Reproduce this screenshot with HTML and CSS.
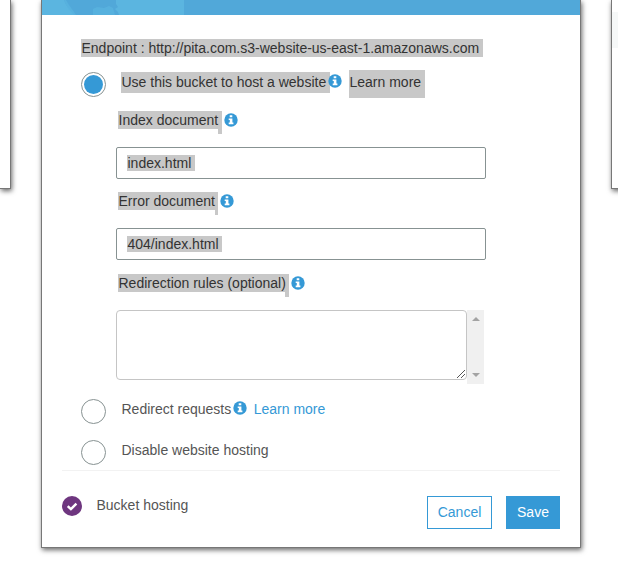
FILE: index.html
```html
<!DOCTYPE html>
<html lang="en">
<head>
<meta charset="utf-8">
<title>Static website hosting</title>
<link rel="stylesheet" href="styles.css">
</head>
<body>
<svg width="0" height="0" class="defs">
  <symbol id="info" viewBox="0 0 14 14">
    <circle cx="7" cy="7" r="6.7" fill="#3599d6"/>
    <path d="M5.7 2.3h2.6v2H5.7zM4.7 5.4h3.7v4.2h1v1.6H4.7V9.6h1.1V7H4.7z" fill="#fff"/>
  </symbol>
</svg>
<main class="page">
  <div class="card card-left"></div>
  <section class="card modal">
    <svg class="banner" viewBox="0 0 538 15">
      <rect width="538" height="15" fill="#51a8d9"/>
      <path d="M0 0H22Q25 8 32 15H0zM74 0H142V15H77L76 12L73 9L76 7L74 4z" fill="#5bb5e0"/>
      <path d="M24 0L27 5L32 12L34 15H30Q25 8 22 0zM51 15V9L55 7L62 8L67 6L71 8L73 15z" fill="#5bb5e0" opacity=".65"/>
    </svg>
    <div class="content">
      <div class="endpoint"><span class="sel">Endpoint : http://pita.com.s3-website-us-east-1.amazonaws.com</span></div>
      <div class="option first">
        <span class="radio on"></span>
        <span class="sel host">Use this bucket to host a website</span>
        <svg class="info"><use href="#info"/></svg>
        <span class="sel learn">Learn more</span>
      </div>
      <div class="fields">
        <div class="label"><span class="sel tail index">Index document</span><svg class="info"><use href="#info"/></svg></div>
        <div class="input"><span class="sel">index.html</span></div>
        <div class="label"><span class="sel tail error">Error document</span><svg class="info"><use href="#info"/></svg></div>
        <div class="input"><span class="sel">404/index.html</span></div>
        <div class="label third"><span class="sel tail rules">Redirection rules (optional)</span><svg class="info"><use href="#info"/></svg></div>
        <div class="area">
          <div class="textarea"><svg class="grip" viewBox="0 0 8 8"><path d="M0 8L8 0M4 8L8 4" stroke="#555" fill="none" shape-rendering="crispEdges"/></svg></div>
          <div class="scroll">
            <svg width="8" height="4"><path d="M0 4L4 0L8 4z" fill="#a3a3a3"/></svg>
            <svg width="8" height="4"><path d="M0 0H8L4 4z" fill="#a3a3a3"/></svg>
          </div>
        </div>
      </div>
      <div class="option redirect">
        <span class="radio"></span><span class="text">Redirect requests</span>
        <svg class="info"><use href="#info"/></svg><a class="link">Learn more</a>
      </div>
      <div class="option disable"><span class="radio"></span><span class="text">Disable website hosting</span></div>
    </div>
    <footer class="footer">
      <svg class="check" viewBox="0 0 20 20"><circle cx="10" cy="10" r="10" fill="#6e367f"/><path d="M5.7 10.2L8.9 13.2L14.4 7.7" stroke="#fff" stroke-width="2.4" fill="none"/></svg>
      <span class="status">Bucket hosting</span>
      <button class="btn cancel">Cancel</button>
      <button class="btn save">Save</button>
    </footer>
  </section>
  <div class="card card-right"><div class="shade"></div></div>
</main>
</body>
</html>
```
FILE: styles.css
```css
* { box-sizing: border-box; }
body {
  margin: 0;
  overflow: hidden;
  background: #fff;
  color: #555;
  font: 14px/18px "Liberation Sans", Arial, sans-serif;
}
.defs { position: absolute; }
.page { display: flex; align-items: flex-start; width: 618px; height: 566px; }
.card {
  flex: none;
  background: #fff;
  border: 1px solid #777;
  border-top: 0;
  box-shadow: 1px 2px 5px rgba(0, 0, 0, .6);
}
.card-left { width: 11px; height: 189px; border-left: 0; }
.modal { width: 540px; height: 548px; margin-left: 30px; }
.card-right { width: 20px; height: 189px; margin-left: 30px; }
.shade { height: 36px; margin-top: 12px; background: #f6f8f8; }
.banner { display: block; width: 538px; height: 15px; }
.content { height: 455px; padding: 24px 0 0 39px; }
.sel { display: block; height: 18px; padding-left: .5px; background: #c8c8c8; color: #333; white-space: nowrap; }
.endpoint .sel { width: 402px; }
.option { display: flex; align-items: flex-start; height: 28px; }
.first { margin-top: 13px; }
.radio { flex: none; width: 25px; height: 25px; border: 1px solid #879292; border-radius: 50%; }
.on { padding: 2px; background: #3599d6 content-box; }
.first .radio { margin-top: 2px; }
.info { flex: none; display: block; position: relative; width: 14px; height: 14px; }
.host { width: 209px; height: 21px; margin: 2px 0 0 15px; line-height: 20px; }
.first .info { margin: 4px 0 0 -2px; }
.learn { width: 76px; height: 28px; margin-left: 7px; line-height: 24px; }
.fields { padding-left: 35px; }
.label { display: flex; height: 49px; padding: 13px 0 0 2px; }
.label .info { margin: 2px 0 0 2px; }
.tail { position: relative; }
.tail::after { content: ""; position: absolute; right: 0; top: 18px; width: 4px; height: 5px; background: #c8c8c8; }
.index { width: 104px; }
.error { width: 100px; }
.error::after { width: 3px; }
.rules { width: 171px; }
.third { height: 50px; padding-top: 14px; }
.input { width: 370px; height: 32px; padding: 7px 10px; border: 1px solid #879292; border-radius: 2px; }
.input .sel { display: inline-block; height: 16px; padding-right: 3.5px; line-height: 16px; vertical-align: top; }
.area { display: flex; height: 74px; }
.textarea { display: flex; justify-content: flex-end; align-items: flex-end; width: 351px; height: 70px; padding: 1px; border: 1px solid #c5c5c5; border-radius: 4px; }
.grip { width: 8px; height: 8px; }
.scroll { display: flex; flex-direction: column; align-items: center; justify-content: space-between; width: 17px; padding: 7px 0; background: #f0f0f0; }
.redirect { margin-top: 15px; }
.disable { margin-top: 13px; }
.text { margin-left: 15.5px; line-height: 20px; }
.redirect .info { margin: 2px 0 0 1.5px; }
.link { margin-left: 7px; color: #3599d6; line-height: 20px; }
.footer { display: flex; align-items: flex-start; margin: 0 20px; padding-top: 25px; border-top: 1px solid #f2f2f2; }
.check { width: 20px; height: 20px; }
.status { margin: 0 auto 0 14.5px; }
.btn { height: 33px; padding: 0 0 2px; border: 1px solid #3599d6; font: inherit; }
.cancel { width: 65px; background: #fff; color: #3599d6; }
.save { width: 54px; margin-left: 14px; background: #3599d6; color: #fff; }
```
